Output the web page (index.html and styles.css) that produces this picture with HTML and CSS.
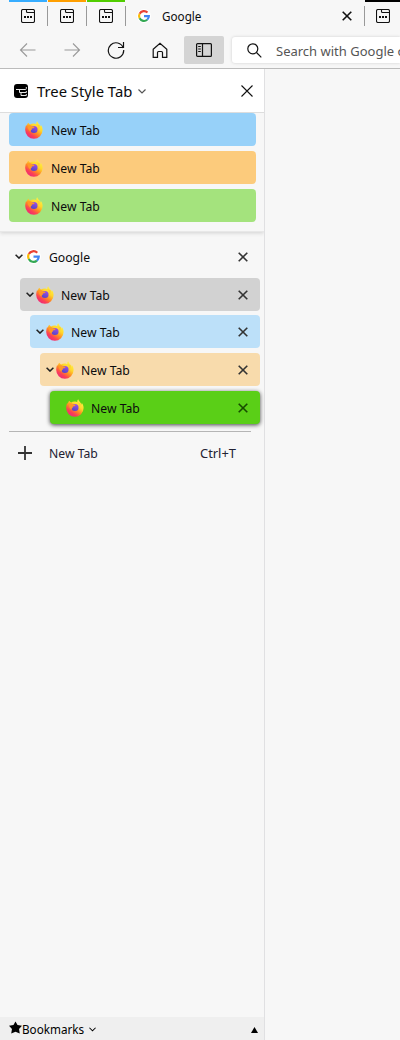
FILE: index.html
```html
<!DOCTYPE html>
<html lang="en">
<head>
<meta charset="utf-8">
<title>Google</title>
<link rel="stylesheet" href="styles.css">
</head>
<body>
<svg class="sprite" width="0" height="0">
  <defs>
    <linearGradient id="flame" x1=".85" y1=".1" x2=".25" y2=".95">
      <stop offset="0" stop-color="#fff244"/><stop offset=".32" stop-color="#ffd62c"/><stop offset=".58" stop-color="#ff8a22"/><stop offset=".8" stop-color="#fc4055"/><stop offset="1" stop-color="#ee2a78"/>
    </linearGradient>
    <linearGradient id="globe" x1=".7" y1="0" x2=".3" y2="1">
      <stop offset="0" stop-color="#a14de8"/><stop offset="1" stop-color="#5145c4"/>
    </linearGradient>
  </defs>
  <symbol id="firefox" viewBox="0 0 18 18">
    <path fill="url(#flame)" d="M12.2.2c-.9 1-1.100 2-.8 3C10.500 2.700 9.500 2.400 8.500 2.600 7 2.700 6 3 5.200 3.500 4.300 3.200 3.600 2.600 3.300 1.700 2.300 2.700 2 3.700 2 4.700 1.500 4.600 1.300 4 1.300 3.400.6 5 .2 7 .2 9.100a8.700 8.700 0 0 0 17.400 0c0-2.300-.8-4-2-5.300.2.800.2 1.300.1 1.900C15 3.300 12.800 2.600 12.200.2z"/>
    <circle cx="9" cy="8.500" r="3.600" fill="url(#globe)"/>
    <path fill="#ff9827" d="M2.800 4.500c1.700-.5 3.500 0 4.400 1l2.300.2c.2.800-.6 1.400-1.900 1.600-.8.200-1 .9-.8 1.400-1 .2-1.500 1-1.300 2.100C3.500 9.500 2.500 7 2.800 4.500z"/>
    <path fill="#ffcf30" d="M11 3c2 1.300 2.700 3.500 1.700 6 1.800-1 2.500-2.800 1.900-4.800z"/>
  </symbol>
  <symbol id="google" viewBox="0 0 16 16">
    <circle cx="8" cy="8" r="8" fill="#fff"/>
    <g fill="none" stroke-width="2.400">
      <path stroke="#ea4335" d="M3 5.400a5.600 5.600 0 0 1 9-1.300"/>
      <path stroke="#fbbc05" d="M3 10.600a5.600 5.600 0 0 1 0-5.200"/>
      <path stroke="#34a853" d="M3 10.600a5.600 5.600 0 0 0 8.700 1.700"/>
      <path stroke="#4285f4" d="M8 8.100h5.600a5.600 5.600 0 0 1-1.900 4.200"/>
    </g>
  </symbol>
  <symbol id="page" viewBox="0 0 14 14">
    <g fill="none" stroke="#111" stroke-width="1.100"><rect x=".5" y=".5" width="13" height="13" rx="1.500"/><path d="M5.500.7v1.800q0 1 1 1h6.800"/></g>
    <path fill="#111" d="M3 7h2v2H3zM6 7h2v2H6zM9 7h2v2H9z"/>
  </symbol>
  <symbol id="close" viewBox="0 0 10 10"><path d="M.7.700l8.600 8.600M9.300.7L.7 9.300" fill="none" stroke="currentColor" stroke-width="1.600"/></symbol>
  <symbol id="chevron" viewBox="0 0 8 5"><path d="M.6.700L4 4.100 7.400.7" fill="none" stroke="currentColor" stroke-width="1.500"/></symbol>
  <symbol id="chevron-thin" viewBox="0 0 8 5"><path d="M.5.500L4 4 7.500.5" fill="none" stroke="currentColor" stroke-width="1.200"/></symbol>
</svg>

<header class="tabstrip">
  <div class="mini blue"><svg class="page"><use href="#page"/></svg></div>
  <div class="mini orange"><svg class="page"><use href="#page"/></svg></div>
  <div class="mini green"><svg class="page"><use href="#page"/></svg></div>
  <div class="current"><svg class="site"><use href="#google"/></svg><span class="current-title">Google</span><svg class="x"><use href="#close"/></svg></div>
  <div class="mini black"><svg class="page"><use href="#page"/></svg></div>
</header>
<nav class="toolbar">
  <span class="tool faded"><svg width="18" height="16" viewBox="0 0 18 16"><path d="M16.500 8H1.500M8 1.500L1.500 8 8 14.500"/></svg></span>
  <span class="tool faded"><svg width="18" height="16" viewBox="0 0 18 16"><path d="M1.500 8h15M10 1.500L16.500 8 10 14.500"/></svg></span>
  <span class="tool"><svg width="18" height="18" viewBox="0 0 18 18"><path d="M16.300 7A7.700 7.700 0 1 0 16.700 9M16.500 1v5.500H11"/></svg></span>
  <span class="tool"><svg width="16" height="17" viewBox="0 0 16 17"><path d="M1.200 7.300L8 1.200l6.800 6.100v8H10.500V10.500q0-1-1-1h-3q-1 0-1 1v4.800H1.200z"/></svg></span>
  <span class="tool pressed"><svg width="16" height="14" viewBox="0 0 16 14"><rect x=".6" y=".6" width="14.800" height="12.800" rx="1"/><path d="M6.500.6v12.800M2.200 3.500h2.600M2.200 6h2.600M2.200 8.500h2.600"/></svg></span>
  <div class="address"><svg width="15" height="15" viewBox="0 0 15 15"><circle cx="5.800" cy="5.800" r="5"/><path d="M9.500 9.500l4.800 4.800"/></svg><span>Search with Google or enter address</span></div>
</nav>

<main class="content">
  <aside class="sidebar">
    <div class="heading">
      <svg class="tree" viewBox="0 0 14 14"><rect width="14" height="14" rx="3"/><path class="tree-line" d="M2 5.500h9.500q.8 0 .8-.8V3M5.500 6v2.500h6.800V7M7 9v2.500h5.300V10"/></svg>
      <span class="heading-title">Tree Style Tab</span>
      <svg class="heading-arrow"><use href="#chevron-thin"/></svg>
      <svg class="heading-close" viewBox="0 0 12 12"><path d="M.5.500l11 11M11.500.5l-11 11"/></svg>
    </div>
    <div class="pinned">
      <div class="pin pin-blue"><svg class="fox"><use href="#firefox"/></svg><span>New Tab</span></div>
      <div class="pin pin-orange"><svg class="fox"><use href="#firefox"/></svg><span>New Tab</span></div>
      <div class="pin pin-green"><svg class="fox"><use href="#firefox"/></svg><span>New Tab</span></div>
    </div>
    <div class="tree-tabs">
      <div class="row root"><svg class="twisty"><use href="#chevron"/></svg><svg class="site"><use href="#google"/></svg><span>Google</span><svg class="x"><use href="#close"/></svg></div>
      <div class="row level1"><svg class="twisty"><use href="#chevron"/></svg><svg class="fox"><use href="#firefox"/></svg><span>New Tab</span><svg class="x"><use href="#close"/></svg></div>
      <div class="row level2"><svg class="twisty"><use href="#chevron"/></svg><svg class="fox"><use href="#firefox"/></svg><span>New Tab</span><svg class="x"><use href="#close"/></svg></div>
      <div class="row level3"><svg class="twisty"><use href="#chevron"/></svg><svg class="fox"><use href="#firefox"/></svg><span>New Tab</span><svg class="x"><use href="#close"/></svg></div>
      <div class="row level4"><svg class="fox"><use href="#firefox"/></svg><span>New Tab</span><svg class="x"><use href="#close"/></svg></div>
    </div>
    <div class="new-tab"><svg width="14" height="14" viewBox="0 0 14 14"><path d="M7 0v14M0 7h14"/></svg><span>New Tab</span><span class="shortcut">Ctrl+T</span></div>
    <footer class="bookmarks">
      <svg class="star" viewBox="0 0 14 13"><path d="M7 0l2.200 3.900 4.800.8-3.200 3.500.8 4.800L7 11l-4.600 2 .8-4.800L0 4.700l4.800-.8z"/></svg>
      <span>Bookmarks</span><svg class="bookmarks-arrow"><use href="#chevron-thin"/></svg>
      <svg class="up" viewBox="0 0 7 6"><path d="M3.500 0L7 6H0z"/></svg>
    </footer>
  </aside>
</main>
</body>
</html>
```
FILE: styles.css
```css
* { box-sizing: border-box; }
html { overflow: hidden; }
body { margin: 0; height: 1040px; overflow: hidden; background: #f7f7f7; color: #0c0c0d; font: 13px/18px "Noto Sans", sans-serif; display: flex; flex-direction: column; }
svg { flex: none; display: block; }
span { white-space: nowrap; }
.sprite { position: absolute; }

.tabstrip { display: flex; height: 32px; flex: none; padding-left: 9px; overflow: hidden; }
.mini, .current { flex: none; height: 26px; display: flex; align-items: center; background: linear-gradient(#999, #999) no-repeat right 6px / 1px 20px; }
.mini { width: 39px; padding: 6px 0 0 12px; background: linear-gradient(#999, #999) no-repeat right 6px / 1px 20px, linear-gradient(var(--strip), var(--strip)) no-repeat 0 0 / 38px 2px; }
.blue { --strip: #37adff; }
.orange { --strip: #ff9f00; }
.green { --strip: #51cd00; }
.black { padding-left: 11px; width: 35px; background: linear-gradient(#000, #000) no-repeat 0 0 / 35px 2px; }
.page { width: 14px; height: 14px; }
.current { width: 239px; padding: 6px 13px 0 11px; }
.site { width: 14px; height: 14px; }
.current-title { margin-left: 11px; font-size: 11.700px; line-height: 16px; }
.x { width: 10px; height: 10px; margin-left: auto; color: #333; }
.current .x { color: #111; }

.toolbar { display: flex; gap: 4px; height: 37px; flex: none; padding: 4px 0 4px 8px; border-bottom: 1px solid #bbb; }
.toolbar svg { fill: none; stroke: #111; stroke-width: 1.2; }
.tool { width: 40px; height: 28px; display: grid; place-items: center; border-radius: 2px; flex: none; }
.toolbar .faded svg { stroke: #999; stroke-width: 1.1; }
.pressed { background: #d4d4d4; }
.address { margin: 1px 0 1px 4px; flex: 1; min-width: 0; height: 26px; background: #fff; border-radius: 3px 0 0 3px; box-shadow: 0 0 3px #ccc; display: flex; align-items: center; padding-left: 15px; gap: 14px; font-size: 13px; color: #555; }
.address span { padding-top: 2px; flex: 1; min-width: 0; overflow: hidden; }

.content { flex: 1; display: flex; overflow: hidden; }
.sidebar { width: 265px; border-right: 1px solid #e0e0e2; display: flex; flex-direction: column; }
.heading { height: 44px; flex: none; background: #fff; border-bottom: 1px solid #ddd; display: flex; align-items: center; padding: 0 11px 0 14px; }
.tree { width: 14px; height: 14px; }
.tree-line { fill: none; stroke: #fff; stroke-width: .9; }
.heading-title { margin-left: 9px; font-size: 14.800px; }
.heading-arrow { width: 8px; height: 5px; margin: 2px 0 0 6px; color: #555; }
.heading-close { width: 12px; height: 12px; margin-left: auto; stroke: #111; stroke-width: 1.1; }

.pinned { height: 119px; flex: none; padding: 0 8px 0 9px; display: grid; grid-template-rows: repeat(3, 33px); gap: 5px; border-bottom: 1px solid #e8e8e8; box-shadow: 0 1px 4px #d0d0d0; clip-path: inset(0 0 -6px 0); }
.pin { display: flex; align-items: center; padding-left: 16px; border-radius: 4px; gap: 8px; font-size: 12.200px; }
.pin-blue { background: #97d1f9; }
.pin-orange { background: #fccb7c; }
.pin-green { background: #a4e37d; }
.fox { width: 18px; height: 18px; }
.pin span, .row span { padding-top: 2px; }

.tree-tabs { flex: none; height: 199px; padding: 8px 4px 0 9px; display: flex; flex-direction: column; gap: 5px; }
.row { height: 33px; flex: none; display: flex; align-items: center; padding: 0 12px 0 6px; border-radius: 4px; font-size: 12.200px; }
.twisty { width: 8px; height: 5px; margin-right: 1.500px; color: #222; }
.row span { margin-left: 7.500px; }
.root .twisty { margin-right: 3px; }
.root span { margin-left: 8px; }
.root .site { width: 15px; height: 15px; }
.level1 { margin-left: 11px; background: #d2d2d2; }
.level1 span { padding-top: 3px; }
.level2 { margin-left: 21px; margin-top: -1px; background: #bce0f9; }
.level3 { margin-left: 31px; background: #f8dbac; }
.level3 span { padding-top: 3px; }
.level4 { margin-left: 41px; background: #5acf17; padding-left: 15.500px; box-shadow: 0 1px 4px #444; }
.level4 .x { color: #174b00; }

.new-tab { margin: 0 13px 0 9px; height: 42px; flex: none; border-top: 1px solid #b5b5b5; padding: 0 15px 0 9px; display: flex; align-items: center; font-size: 12.200px; color: #222233; }
.new-tab svg { stroke: #333; stroke-width: 1.8; }
.new-tab span { margin-left: 17px; padding-top: 2px; }
.new-tab .shortcut { margin-left: auto; padding-top: 0; font-size: 12.900px; }

.bookmarks { margin-top: auto; height: 23px; background: #efefef; display: flex; align-items: center; padding: 0 6px 0 9px; color: #000; font-size: 11.700px; }
.star { width: 13px; height: 13px; margin-bottom: 3px; }
.bookmarks span { padding-top: 1px; }
.bookmarks-arrow { width: 7px; height: 5px; margin: 1px 0 0 5px; }
.up { width: 7px; height: 6px; margin-left: auto; margin-top: 2px; }
```
